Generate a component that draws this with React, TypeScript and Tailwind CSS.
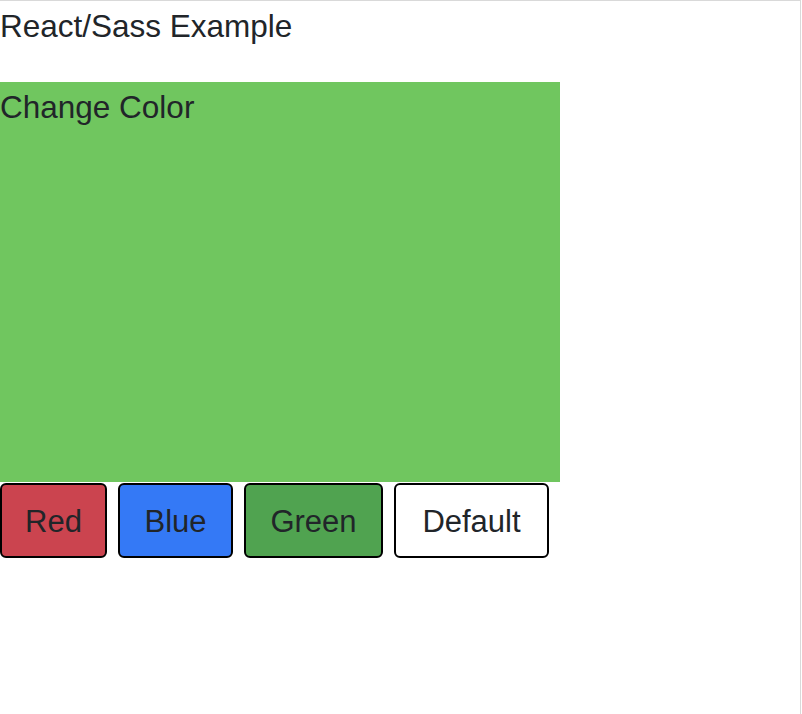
export default function App() {
  const buttons = [
    { label: "Red", cls: "bg-[#cb444f] w-[107px]" },
    { label: "Blue", cls: "bg-[#3479f6] w-[115px]" },
    { label: "Green", cls: "bg-[#50a350] w-[139px]" },
    { label: "Default", cls: "bg-white w-[155px]" },
  ];

  return (
    <div className="h-[714px] w-[801px] border-t border-r border-[#d9d9d9] bg-white font-['Liberation_Sans',Arial,sans-serif] text-[#212529]">
      <div className="h-[81px] text-[31.5px] leading-[50px]">React/Sass Example</div>
      <div className="h-[400px] w-[560px] bg-[#70c65f] text-[31.5px] leading-[50px]">Change Color</div>
      <div className="flex gap-[11px] pt-px">
        {buttons.map((b) => (
          <button
            key={b.label}
            type="button"
            className={`h-[75px] rounded-[6px] border-2 border-black pt-[3px] text-[31px] text-[#212529] ${b.cls}`}
          >
            {b.label}
          </button>
        ))}
      </div>
    </div>
  );
}
